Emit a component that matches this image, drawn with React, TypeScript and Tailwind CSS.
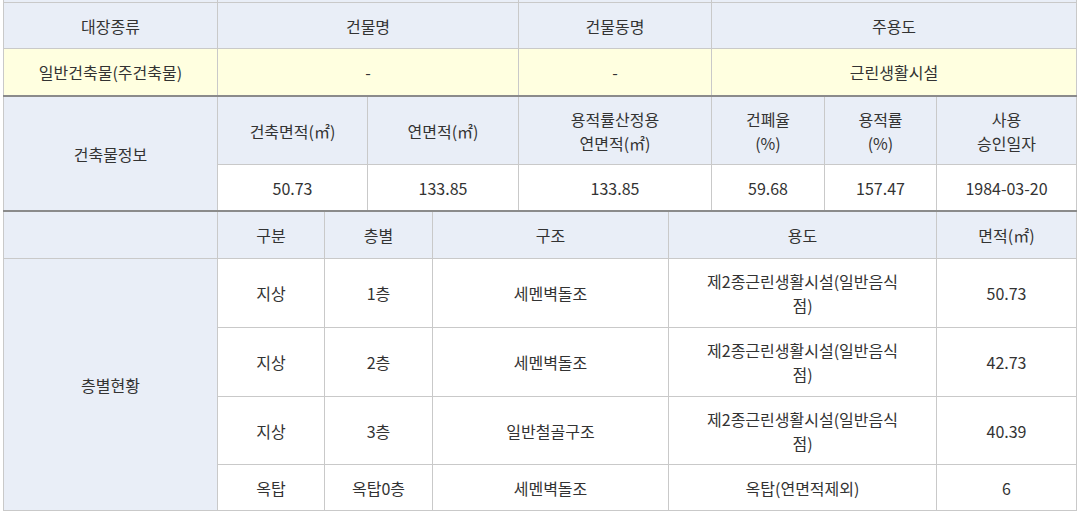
const cell = 'flex items-center justify-center text-center border-r border-[#c9c9c9]';
const head = `${cell} bg-[#e9eef7]`;
const body = `${cell} bg-white`;
const line = 'border-b border-[#c9c9c9]';

const Bar = () => <div className="h-[2px] w-[1074px] bg-[#8b8b8b]" />;

const floors = [
  { kind: '지상', floor: '1층', structure: '세멘벽돌조', use: ['제2종근린생활시설(일반음식', '점)'], area: '50.73', h: 'h-[69px]' },
  { kind: '지상', floor: '2층', structure: '세멘벽돌조', use: ['제2종근린생활시설(일반음식', '점)'], area: '42.73', h: 'h-[69px]' },
  { kind: '지상', floor: '3층', structure: '일반철골구조', use: ['제2종근린생활시설(일반음식', '점)'], area: '40.39', h: 'h-[68px]' },
  { kind: '옥탑', floor: '옥탑0층', structure: '세멘벽돌조', use: ['옥탑(연면적제외)'], area: '6', h: 'h-[46px]' },
];

export default function App() {
  return (
    <div className="w-[1080px] h-[512px] overflow-hidden bg-white pl-[3px] font-['Noto_Sans_CJK_KR','Noto_Sans',sans-serif] text-[16px] leading-[24px] text-[#333]">
      {/* 대장 기본 */}
      <div className="w-[1074px] border-l border-[#c9c9c9] grid grid-cols-[214px_301px_193px_365px]">
        <div className={`${head} ${line} h-[3px]`} />
        <div className={`${head} ${line} h-[3px]`} />
        <div className={`${head} ${line} h-[3px]`} />
        <div className={`${head} ${line} h-[3px]`} />

        <div className={`${head} ${line} h-[46px]`}>대장종류</div>
        <div className={`${head} ${line} h-[46px]`}>건물명</div>
        <div className={`${head} ${line} h-[46px]`}>건물동명</div>
        <div className={`${head} ${line} h-[46px]`}>주용도</div>

        <div className={`${cell} bg-[#ffffe0] h-[46px]`}>일반건축물(주건축물)</div>
        <div className={`${cell} bg-[#ffffe0] h-[46px]`}>-</div>
        <div className={`${cell} bg-[#ffffe0] h-[46px]`}>-</div>
        <div className={`${cell} bg-[#ffffe0] h-[46px]`}>근린생활시설</div>
      </div>
      <Bar />

      {/* 건축물정보 */}
      <div className="w-[1074px] border-l border-[#c9c9c9] grid grid-cols-[214px_150px_151px_193px_113px_112px_140px]">
        <div className={`${head} row-span-2`}>건축물정보</div>
        <div className={`${head} ${line} h-[68px]`}>건축면적(㎡)</div>
        <div className={`${head} ${line} h-[68px]`}>연면적(㎡)</div>
        <div className={`${head} ${line} h-[68px]`}>
          용적률산정용
          <br />
          연면적(㎡)
        </div>
        <div className={`${head} ${line} h-[68px]`}>
          건폐율
          <br />
          (%)
        </div>
        <div className={`${head} ${line} h-[68px]`}>
          용적률
          <br />
          (%)
        </div>
        <div className={`${head} ${line} h-[68px]`}>
          사용
          <br />
          승인일자
        </div>

        <div className={`${body} h-[45px]`}>50.73</div>
        <div className={`${body} h-[45px]`}>133.85</div>
        <div className={`${body} h-[45px]`}>133.85</div>
        <div className={`${body} h-[45px]`}>59.68</div>
        <div className={`${body} h-[45px]`}>157.47</div>
        <div className={`${body} h-[45px]`}>1984-03-20</div>
      </div>
      <Bar />

      {/* 층별현황 */}
      <div className="w-[1074px] border-l border-[#c9c9c9] grid grid-cols-[214px_107px_108px_236px_268px_140px]">
        <div className={`${head} ${line} h-[47px]`} />
        <div className={`${head} ${line} h-[47px]`}>구분</div>
        <div className={`${head} ${line} h-[47px]`}>층별</div>
        <div className={`${head} ${line} h-[47px]`}>구조</div>
        <div className={`${head} ${line} h-[47px]`}>용도</div>
        <div className={`${head} ${line} h-[47px]`}>면적(㎡)</div>

        <div className={`${head} ${line} row-span-4`}>층별현황</div>
        {floors.map((f, i) => (
          <div key={i} className="contents">
            <div className={`${body} ${line} ${f.h}`}>{f.kind}</div>
            <div className={`${body} ${line} ${f.h}`}>{f.floor}</div>
            <div className={`${body} ${line} ${f.h}`}>{f.structure}</div>
            <div className={`${body} ${line} ${f.h}`}>
              <span>
                {f.use.map((u, j) => (
                  <span key={j} className="block">
                    {u}
                  </span>
                ))}
              </span>
            </div>
            <div className={`${body} ${line} ${f.h}`}>{f.area}</div>
          </div>
        ))}
      </div>
    </div>
  );
}
